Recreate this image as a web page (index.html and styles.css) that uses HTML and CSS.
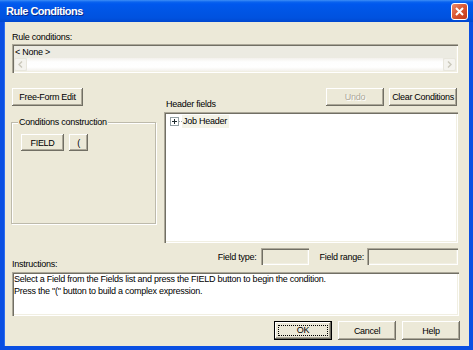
FILE: index.html
```html
<!DOCTYPE html>
<html lang="en">
<head>
<meta charset="UTF-8">
<title>Rule Conditions</title>
<link rel="stylesheet" href="styles.css">
</head>
<body>

<div class="window">
    <div class="titlebar">
        <span class="title">Rule Conditions</span>
        <span class="close">
            <svg width="9" height="9" viewBox="0 0 9 9"><path d="M1 1L8 8M8 1L1 8" stroke="#fff" stroke-width="2" fill="none"/></svg>
        </span>
    </div>

    <div class="frame">
        <div class="label rule-label">Rule conditions:</div>
        <div class="rule-box sunken">
            <div class="rule-text">&lt; None &gt;</div>
            <div class="hscroll">
                <span class="scroll-btn">
                    <svg width="5" height="7" viewBox="0 0 5 7"><path d="M4 0.5L1 3.5L4 6.5" stroke="#cac8bb" stroke-width="1.4" fill="none"/></svg>
                </span>
                <span class="scroll-track"></span>
                <span class="scroll-btn">
                    <svg width="5" height="7" viewBox="0 0 5 7"><path d="M1 0.5L4 3.5L1 6.5" stroke="#cac8bb" stroke-width="1.4" fill="none"/></svg>
                </span>
            </div>
        </div>

        <div class="middle">
            <div class="left-col">
                <button class="btn btn-freeform">Free-Form Edit</button>
                <div class="groupbox">
                    <span class="group-title">Conditions construction</span>
                    <div class="group-buttons">
                        <button class="btn btn-field">FIELD</button>
                        <button class="btn btn-paren">(</button>
                    </div>
                </div>
            </div>

            <div class="right-col">
                <div class="header-row">
                    <span class="label header-label">Header fields</span>
                    <div class="header-buttons">
                        <button class="btn btn-undo" disabled>Undo</button>
                        <button class="btn btn-clear">Clear Conditions</button>
                    </div>
                </div>
                <div class="tree sunken">
                    <div class="tree-item">
                        <span class="expander">
                            <svg width="9" height="9" viewBox="0 0 9 9"><rect x="0.5" y="0.5" width="8" height="8" fill="#fff" stroke="#93a0a4"/><path d="M2 4.5H7M4.5 2V7" stroke="#1e2a2e" stroke-width="1"/></svg>
                        </span>
                        <span class="dots"></span>
                        <span class="node">Job Header</span>
                    </div>
                </div>
            </div>
        </div>

        <div class="info-row">
            <span class="label instr-label">Instructions:</span>
            <div class="field-info">
                <span class="label">Field type:</span>
                <span class="field-box type-box sunken"></span>
                <span class="label range-label">Field range:</span>
                <span class="field-box range-box sunken"></span>
            </div>
        </div>

        <div class="instructions sunken">
            Select a Field from the Fields list and press the FIELD button to begin the condition.<br>
            Press the "(" button to build a complex expression.
        </div>

        <div class="dialog-buttons">
            <button class="btn btn-dialog btn-default"><span class="focus">OK</span></button>
            <button class="btn btn-dialog">Cancel</button>
            <button class="btn btn-dialog">Help</button>
        </div>
    </div>
</div>

</body>
</html>
```

FILE: styles.css
```css
body {
    margin: 0;
    background-color: #ece9d8;
    font-family: "Liberation Sans", Arial, sans-serif;
    font-size: 9px;
    letter-spacing: -0.25px;
    color: #000;
}
.window {
    width: 473px;
    height: 350px;
    display: flex;
    flex-direction: column;
}
.titlebar {
    height: 22px;
    flex: none;
    display: flex;
    align-items: center;
    justify-content: space-between;
    padding: 0 5px 0 6px;
    background: linear-gradient(to bottom, #3d8ef6 0px, #0a63ef 2px, #0058ee 4px, #0055e5 11px, #0052df 18px, #0047cf 22px);
    box-sizing: border-box;
}
.title {
    color: #fff;
    font-weight: bold;
    font-size: 11px;
    letter-spacing: -0.5px;
    text-shadow: 1px 1px 0 #0a2a8a;
}
.close {
    width: 15px;
    height: 15px;
    border: 1px solid #fff;
    border-radius: 3px;
    background: linear-gradient(to bottom right, #eb8a6c, #d95530 50%, #c0391a);
    display: flex;
    align-items: center;
    justify-content: center;
    margin-top: 1px;
}
.frame {
    flex: 1;
    border: 4px solid #0a4fe2;
    border-top: none;
    box-shadow: inset 1px 0 0 #2a6cf0;
    padding: 9px 11px 6px 8px;
    display: flex;
    flex-direction: column;
}
.label {
    line-height: 12px;
    white-space: nowrap;
}
.rule-label {
    margin-bottom: 1px;
}

/* sunken 3d edge */
.sunken {
    box-shadow: inset 1px 1px 0 #aca899, inset 2px 2px 0 #716f64, inset -1px -1px 0 #fff, inset -2px -2px 0 #f1efe2;
    box-sizing: border-box;
}
.rule-box {
    height: 29px;
    padding: 2px;
    background-color: #ecebe2;
    display: flex;
    flex-direction: column;
}
.rule-text {
    height: 12px;
    line-height: 12px;
    padding-left: 1px;
}
.hscroll {
    height: 13px;
    display: flex;
}
.scroll-btn {
    width: 13px;
    height: 13px;
    box-sizing: border-box;
    border: 1px solid #e8e6dc;
    border-radius: 2px;
    background-color: #f4f3ee;
    display: flex;
    align-items: center;
    justify-content: center;
}
.scroll-track {
    flex: 1;
    background: linear-gradient(to bottom, #f3f1ec, #fefefe 30%, #fff 70%, #f3f1ec);
}

.btn {
    font-family: inherit;
    font-size: 9px;
    letter-spacing: -0.3px;
    white-space: nowrap;
    color: #000;
    background-color: #ece9d8;
    border: none;
    padding: 0;
    margin: 0;
    box-shadow: inset -1px -1px 0 #716f64, inset 1px 1px 0 #fff, inset -2px -2px 0 #aca899;
    box-sizing: border-box;
}
.btn:disabled {
    color: #aca899;
    text-shadow: 1px 1px 0 #fff;
}

.middle {
    margin-top: 15px;
    display: flex;
    gap: 8px;
}
.left-col {
    width: 145px;
    margin-left: -1px;
    display: flex;
    flex-direction: column;
}
.btn-freeform {
    width: 71px;
    height: 18px;
    margin-left: 1px;
}
.groupbox {
    position: relative;
    margin-top: 16px;
    height: 102px;
    border: 1px solid #bdbaab;
    box-shadow: 1px 1px 0 #fff, inset 1px 1px 0 #fff;
    box-sizing: border-box;
    padding: 11px 0 0 9px;
}
.group-title {
    position: absolute;
    top: -7px;
    left: 6px;
    padding: 0 1px;
    line-height: 12px;
    background-color: #ece9d8;
}
.group-buttons {
    display: flex;
    gap: 5px;
}
.btn-field {
    width: 43px;
    height: 17px;
}
.btn-paren {
    width: 19px;
    height: 17px;
}

.right-col {
    width: 294px;
    display: flex;
    flex-direction: column;
}
.header-row {
    height: 24px;
    display: flex;
    justify-content: space-between;
}
.header-label {
    align-self: flex-end;
    margin: 0 0 2px 2px;
}
.header-buttons {
    display: flex;
    gap: 5px;
    margin-right: 1px;
}
.btn-undo {
    width: 58px;
    height: 18px;
}
.btn-clear {
    width: 68px;
    height: 18px;
}
.tree {
    height: 131px;
    background-color: #fff;
    padding: 2px 3px;
}
.tree-item {
    height: 14px;
    display: flex;
    align-items: center;
}
.expander {
    width: 9px;
    height: 9px;
    margin-left: 3px;
    display: flex;
}
.dots {
    width: 3px;
    border-top: 1px dotted #a0a0a0;
}
.node {
    line-height: 13px;
    padding: 0 2px 0 1px;
    background-color: #f4f3e8;
}

.info-row {
    margin-top: 5px;
    height: 23px;
    display: flex;
    justify-content: space-between;
}
.instr-label {
    align-self: flex-end;
    margin-bottom: 1px;
}
.field-info {
    display: flex;
    align-items: center;
    height: 17px;
}
.field-box {
    height: 17px;
    background-color: #ece9d8;
    margin-left: 5px;
}
.type-box {
    width: 48px;
}
.range-label {
    margin-left: 10px;
}
.range-box {
    width: 91px;
    margin-left: 3px;
}

.instructions {
    margin-top: 1px;
    height: 44px;
    margin-right: -1px;
    background-color: #fff;
    padding: 1px 2px;
    line-height: 12px;
}

.dialog-buttons {
    margin-top: 5px;
    margin-right: -2px;
    display: flex;
    justify-content: flex-end;
    gap: 6px;
}
.btn-dialog {
    width: 58px;
    height: 19px;
}
.btn-default {
    border: 1px solid #000;
    padding: 3px;
    box-shadow: inset -1px -1px 0 #716f64, inset 1px 1px 0 #fff, inset -2px -2px 0 #aca899;
}
.focus {
    display: block;
    height: 100%;
    border: 1px dotted #000;
    box-sizing: border-box;
    line-height: 9px;
}
```
